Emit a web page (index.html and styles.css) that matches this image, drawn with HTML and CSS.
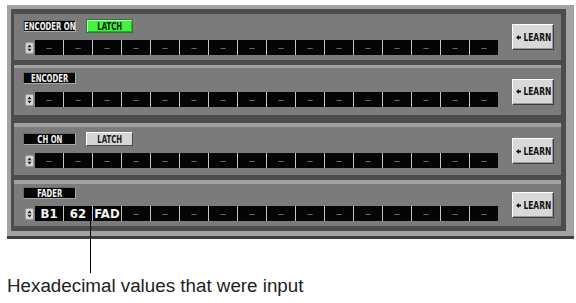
FILE: index.html
```html
<!DOCTYPE html>
<html>
<head>
<meta charset="utf-8">
<link rel="stylesheet" href="styles.css">
</head>
<body>
<div class="frame">
  <div class="inner">
    <section class="sec s1">
      <div class="main">
        <div class="head"><span class="label"><span class="t">ENCODER ON</span></span><span class="latch on"><span class="t">LATCH</span></span></div>
        <div class="row">
          <span class="spin"><svg width="9" height="12" viewBox="0 0 9 12"><rect x="0.5" y="0.5" width="8" height="11" rx="1.5" fill="#d6d6d6" stroke="#9a9a9a"/><polygon points="4.5,2.6 2.4,5.2 6.6,5.2" fill="#222"/><polygon points="2.4,6.8 6.6,6.8 4.5,9.4" fill="#222"/></svg></span>
          <div class="cells"><span>–</span><span>–</span><span>–</span><span>–</span><span>–</span><span>–</span><span>–</span><span>–</span><span>–</span><span>–</span><span>–</span><span>–</span><span>–</span><span>–</span><span>–</span><span>–</span></div>
        </div>
      </div>
      <button class="learn"><svg width="5" height="5" viewBox="0 0 5 5"><polygon points="0,2.5 3,0 3,5" fill="#111"/><rect x="3" y="1.5" width="2" height="2" fill="#111"/></svg><span class="t">LEARN</span></button>
    </section>
    <section class="sec s2">
      <div class="main">
        <div class="head"><span class="label"><span class="t">ENCODER</span></span></div>
        <div class="row">
          <span class="spin"><svg width="9" height="12" viewBox="0 0 9 12"><rect x="0.5" y="0.5" width="8" height="11" rx="1.5" fill="#d6d6d6" stroke="#9a9a9a"/><polygon points="4.5,2.6 2.4,5.2 6.6,5.2" fill="#222"/><polygon points="2.4,6.8 6.6,6.8 4.5,9.4" fill="#222"/></svg></span>
          <div class="cells"><span>–</span><span>–</span><span>–</span><span>–</span><span>–</span><span>–</span><span>–</span><span>–</span><span>–</span><span>–</span><span>–</span><span>–</span><span>–</span><span>–</span><span>–</span><span>–</span></div>
        </div>
      </div>
      <button class="learn"><svg width="5" height="5" viewBox="0 0 5 5"><polygon points="0,2.5 3,0 3,5" fill="#111"/><rect x="3" y="1.5" width="2" height="2" fill="#111"/></svg><span class="t">LEARN</span></button>
    </section>
    <section class="sec s3">
      <div class="main">
        <div class="head"><span class="label"><span class="t">CH ON</span></span><span class="latch"><span class="t">LATCH</span></span></div>
        <div class="row">
          <span class="spin"><svg width="9" height="12" viewBox="0 0 9 12"><rect x="0.5" y="0.5" width="8" height="11" rx="1.5" fill="#d6d6d6" stroke="#9a9a9a"/><polygon points="4.5,2.6 2.4,5.2 6.6,5.2" fill="#222"/><polygon points="2.4,6.8 6.6,6.8 4.5,9.4" fill="#222"/></svg></span>
          <div class="cells"><span>–</span><span>–</span><span>–</span><span>–</span><span>–</span><span>–</span><span>–</span><span>–</span><span>–</span><span>–</span><span>–</span><span>–</span><span>–</span><span>–</span><span>–</span><span>–</span></div>
        </div>
      </div>
      <button class="learn"><svg width="5" height="5" viewBox="0 0 5 5"><polygon points="0,2.5 3,0 3,5" fill="#111"/><rect x="3" y="1.5" width="2" height="2" fill="#111"/></svg><span class="t">LEARN</span></button>
    </section>
    <section class="sec s4">
      <div class="main">
        <div class="head"><span class="label"><span class="t">FADER</span></span></div>
        <div class="row">
          <span class="spin"><svg width="9" height="12" viewBox="0 0 9 12"><rect x="0.5" y="0.5" width="8" height="11" rx="1.5" fill="#d6d6d6" stroke="#9a9a9a"/><polygon points="4.5,2.6 2.4,5.2 6.6,5.2" fill="#222"/><polygon points="2.4,6.8 6.6,6.8 4.5,9.4" fill="#222"/></svg></span>
          <div class="cells"><span class="val">B1</span><span class="val">62</span><span class="val">FAD</span><span>–</span><span>–</span><span>–</span><span>–</span><span>–</span><span>–</span><span>–</span><span>–</span><span>–</span><span>–</span><span>–</span><span>–</span><span>–</span></div>
        </div>
      </div>
      <button class="learn"><svg width="5" height="5" viewBox="0 0 5 5"><polygon points="0,2.5 3,0 3,5" fill="#111"/><rect x="3" y="1.5" width="2" height="2" fill="#111"/></svg><span class="t">LEARN</span></button>
    </section>
  </div>
</div>
<div class="leader"></div>
<p class="caption">Hexadecimal values that were input</p>
</body>
</html>
```

FILE: styles.css
```css
html, body {
  margin: 0;
  padding: 0;
  background: #ffffff;
}

body {
  position: relative;
  width: 576px;
  height: 303px;
  overflow: hidden;
  font-family: "Liberation Sans", Arial, sans-serif;
}

.frame {
  box-sizing: border-box;
  width: 567px;
  margin: 5px 0 0 7px;
  padding: 4px 8px 5px 4px;
  background: #a2a2a2;
  border-bottom: 3px solid #3e3e3e;
}

.inner {
  background: #4c4c4c;
  padding: 5px 5px 5px 3px;
}

.sec {
  display: flex;
  align-items: flex-start;
  background: #7b7b7b;
  padding: 0 7px 0 9px;
}

.s1 { height: 46px; }
.s2 { height: 47px; margin-top: 5px; border-top: 3px solid #a0a0a0; }
.s3 { height: 48px; margin-top: 8px; border-top: 4px solid #a0a0a0; }
.s4 { height: 42px; margin-top: 5px; border-top: 4px solid #a0a0a0; }

.main {
  display: flex;
  flex-direction: column;
  gap: 7px;
}

.s1 .main { padding-top: 5px; }
.s2 .main { padding-top: 3px; }
.s3 .main { padding-top: 5px; }
.s4 .main { padding-top: 2px; gap: 6px; }

.head {
  display: flex;
  align-items: center;
  gap: 10px;
  height: 14px;
}

.t {
  display: inline-block;
  flex: none;
  white-space: nowrap;
  font-family: "DejaVu Sans Condensed", "DejaVu Sans", sans-serif;
  font-weight: bold;
  font-size: 11px;
  line-height: 11px;
  transform: scaleX(0.7);
}

.label {
  box-sizing: border-box;
  width: 53px;
  height: 12px;
  display: flex;
  align-items: center;
  justify-content: center;
  background: #050505;
  color: #f2f2f2;
  border: 1px solid #a8a8a8;
  border-top-color: #6a6a6a;
  border-left-color: #6a6a6a;
}

.latch {
  box-sizing: border-box;
  width: 47px;
  height: 14px;
  display: flex;
  align-items: center;
  justify-content: center;
  color: #1a1a1a;
  background: #d5d5d5;
  border: 1px solid;
  border-color: #ffffff #4a4a4a #4a4a4a #ffffff;
}

.latch.on {
  background: #44f244;
  color: #0b240b;
  border-color: #2f7a2f;
  box-shadow: inset 1px 1px 0 #a8ffa8, inset -1px -1px 0 #25b025;
}

.row {
  display: flex;
  align-items: center;
  height: 15px;
}

.spin {
  display: flex;
  margin: 0 1px 0 2px;
}

.cells {
  display: grid;
  grid-template-columns: repeat(16, 1fr);
  column-gap: 1px;
  width: 463px;
  height: 15px;
  background: #c4c4c4;
}

.cells span {
  display: flex;
  align-items: center;
  justify-content: center;
  background: #050505;
  color: #707070;
  font-family: "DejaVu Sans", sans-serif;
  font-size: 13px;
  line-height: 15px;
}

.cells .val {
  color: #f4f4f4;
  font-family: "DejaVu Sans Condensed", "DejaVu Sans", sans-serif;
  font-weight: bold;
  font-size: 13px;
}

.learn {
  box-sizing: border-box;
  margin-left: auto;
  align-self: center;
  width: 42px;
  height: 26px;
  padding: 0 0 0 2px;
  display: flex;
  align-items: center;
  justify-content: center;
  gap: 0;
  background: #d8d8d8;
  color: #111;
  border: 1px solid;
  border-color: #ffffff #3c3c3c #3c3c3c #ffffff;
  box-shadow: inset -1px -1px 0 #9a9a9a;
}

.learn .t {
  font-size: 11px;
  transform: scaleX(0.76);
  margin: 0 -3px 0 -2px;
}

.leader {
  position: absolute;
  left: 90px;
  top: 212px;
  width: 1px;
  height: 61px;
  background: #000;
}

.caption {
  margin: 37px 0 0 7px;
  font-size: 18.8px;
  line-height: 20px;
  color: #222;
  white-space: nowrap;
}
```
